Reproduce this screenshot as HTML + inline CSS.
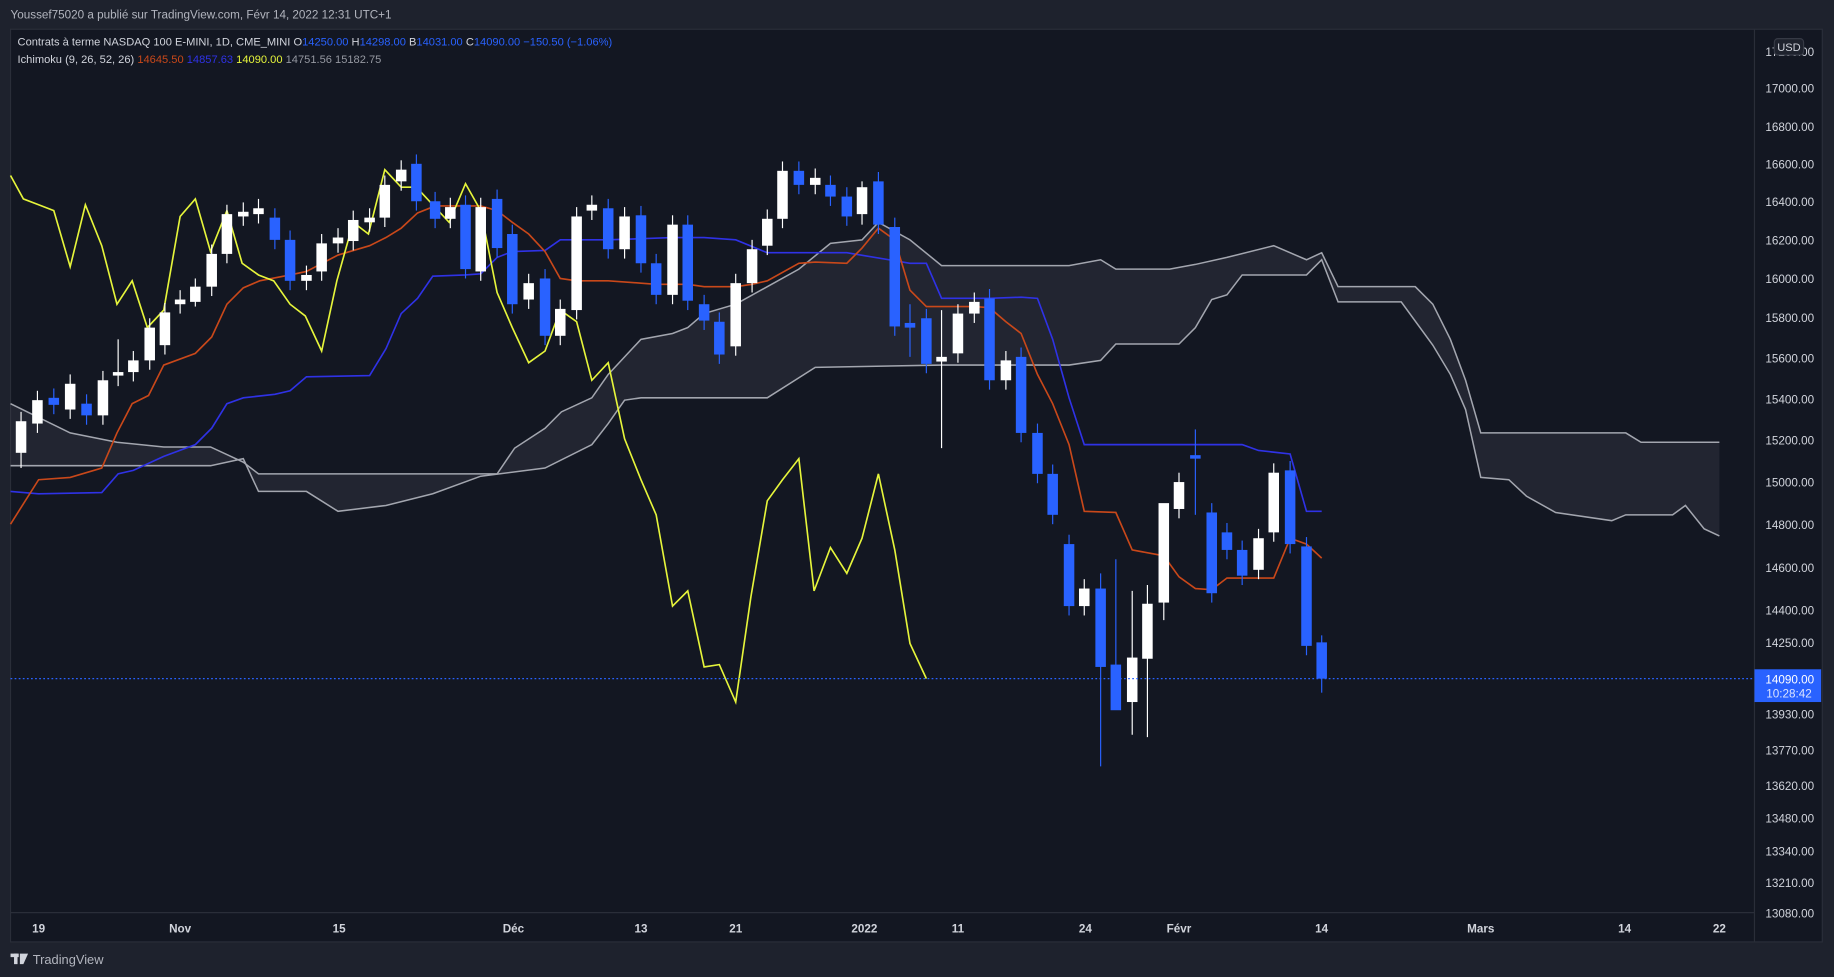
<!DOCTYPE html>
<html><head><meta charset="utf-8"><style>
html,body{margin:0;padding:0;background:#1e222d;overflow:hidden}
svg{display:block}
text{font-family:"Liberation Sans",sans-serif}
</style></head><body>
<svg width="1834" height="977" viewBox="0 0 1568 835" preserveAspectRatio="none" xmlns="http://www.w3.org/2000/svg">
<rect x="0" y="0" width="1568" height="835" fill="#1e222d"/>
<rect x="9" y="25" width="1549" height="780" fill="#131722" stroke="#2a2e39" stroke-width="1"/>
<line x1="1500" y1="25" x2="1500" y2="805" stroke="#2a2e39"/>
<line x1="9" y1="780" x2="1500" y2="780" stroke="#2a2e39"/>
<text x="9" y="16" font-size="10" fill="#b2b5be">Youssef75020 a publié sur TradingView.com, Févr 14, 2022 12:31 UTC+1</text>
<text x="15" y="39" font-size="9.5" fill="#d1d4dc">Contrats à terme NASDAQ 100 E-MINI, 1D, CME_MINI <tspan>O</tspan><tspan fill="#2962ff">14250.00</tspan> H<tspan fill="#2962ff">14298.00</tspan> B<tspan fill="#2962ff">14031.00</tspan> C<tspan fill="#2962ff">14090.00 −150.50 (−1.06%)</tspan></text>
<text x="15" y="54" font-size="9.5" fill="#d1d4dc">Ichimoku (9, 26, 52, 26) <tspan fill="#c9481a">14645.50</tspan> <tspan fill="#2f32e6">14857.63</tspan> <tspan fill="#e6f53b">14090.00</tspan> <tspan fill="#9598a1">14751.56 15182.75</tspan></text>
<!-- cloud -->
<polygon fill="rgba(120,123,140,0.15)" points="9,345 60,370 100,378 140,382 180,382 208,395 221,405 262,405 330,405 425,405 440,383 466,366 480,352 506,340 520,320 534,305 548,290 575,285 588,280 602,268 629,260 656,245 683,230 710,208 737,205 751,190 778,205 805,227 833,227 873,227 914,227 941,222 954,230 1000,230 1022,226 1049,220 1089,210 1117,222 1130,216 1144,245 1210,245 1225,260 1240,290 1253,325 1266,370 1390,370 1403,378 1470,378 1470,458 1457,452 1441,432 1430,440 1390,440 1378,445 1330,438 1305,424 1290,410 1266,408 1253,350 1240,320 1225,295 1198,258 1144,258 1130,222 1117,235 1062,235 1049,252 1036,256 1022,280 1008,294 954,294 941,308 914,312 805,312 697,314 656,340 602,340 575,340 548,340 534,342 520,362 506,380 466,400 411,407 370,422 330,432 289,437 262,420 221,420 208,392 180,398 9,398"/>
<polyline fill="none" stroke="#a3a6af" stroke-width="1.3" points="9,345 60,370 100,378 140,382 180,382 208,395 221,405 262,405 330,405 425,405 440,383 466,366 480,352 506,340 520,320 534,305 548,290 575,285 588,280 602,268 629,260 656,245 683,230 710,208 737,205 751,190 778,205 805,227 833,227 873,227 914,227 941,222 954,230 1000,230 1022,226 1049,220 1089,210 1117,222 1130,216 1144,245 1210,245 1225,260 1240,290 1253,325 1266,370 1390,370 1403,378 1470,378"/>
<polyline fill="none" stroke="#a3a6af" stroke-width="1.3" points="9,398 180,398 208,392 221,420 262,420 289,437 330,432 370,422 411,407 466,400 506,380 520,362 534,342 548,340 575,340 602,340 656,340 697,314 805,312 914,312 941,308 954,294 1008,294 1022,280 1036,256 1049,252 1062,235 1117,235 1130,222 1144,258 1198,258 1225,295 1240,320 1253,350 1266,408 1290,410 1305,424 1330,438 1378,445 1390,440 1430,440 1441,432 1457,452 1470,458"/>
<!-- kijun -->
<polyline fill="none" stroke="#2f32e6" stroke-width="1.4" points="9,420 33,422 87,421 101,405 114,402 140,390 167,380 181,366 194,345 208,340 235,337 248,334 262,322 316,321 330,298 343,268 357,255 370,236 398,235 411,234 425,220 438,215 466,214 479,205 520,205 548,204 575,203 602,203 629,205 656,216 697,216 724,216 778,225 792,225 805,255 846,255 873,254 887,255 900,290 914,340 927,380 1062,380 1076,385 1103,388 1117,437 1130,437"/>
<!-- tenkan -->
<polyline fill="none" stroke="#c9481a" stroke-width="1.4" points="9,448 33,410 60,408 87,400 100,370 113,345 127,338 140,312 167,302 181,288 194,260 208,246 222,240 248,235 262,232 289,218 316,210 330,203 343,195 357,182 372,176 411,176 425,180 438,190 452,200 466,215 479,238 493,240 520,240 548,242 561,243 588,243 602,245 629,245 643,243 656,240 683,225 697,224 724,225 737,212 751,195 765,205 778,248 792,262 833,262 846,263 860,275 873,285 887,320 900,345 914,380 927,437 954,438 968,470 995,475 1008,493 1022,503 1036,504 1049,494 1089,494 1103,460 1117,465 1130,477"/>
<!-- chikou -->
<polyline fill="none" stroke="#e6f53b" stroke-width="1.4" points="9,150 20,170 33,175 46,180 60,228 73,175 87,210 100,260 113,240 126,280 140,265 154,185 167,170 180,215 194,180 207,225 221,235 234,240 248,260 261,270 275,300 288,240 302,190 315,200 329,145 343,160 356,160 370,175 384,190 398,157 411,180 425,250 438,280 452,310 466,300 479,265 493,275 506,325 520,310 534,375 548,410 561,440 575,518 588,505 602,570 615,568 629,600 642,510 656,428 669,410 683,392 696,505 710,468 724,490 737,460 751,405 765,470 778,550 792,580"/>
<!-- candles -->
<g id="c"></g>
<line x1="9" y1="580" x2="1500" y2="580" stroke="#2962ff" stroke-width="1" stroke-dasharray="1.5,2"/>
<!-- axis labels -->
<g font-size="10" fill="#d1d4dc" text-anchor="end">
<text x="1551" y="48">17200.00</text><text x="1551" y="79">17000.00</text><text x="1551" y="112">16800.00</text><text x="1551" y="144">16600.00</text><text x="1551" y="176">16400.00</text><text x="1551" y="209">16200.00</text><text x="1551" y="242">16000.00</text><text x="1551" y="275">15800.00</text><text x="1551" y="310">15600.00</text><text x="1551" y="345">15400.00</text><text x="1551" y="380">15200.00</text><text x="1551" y="416">15000.00</text><text x="1551" y="452">14800.00</text><text x="1551" y="489">14600.00</text><text x="1551" y="525">14400.00</text><text x="1551" y="553">14250.00</text><text x="1551" y="614">13930.00</text><text x="1551" y="645">13770.00</text><text x="1551" y="675">13620.00</text><text x="1551" y="703">13480.00</text><text x="1551" y="731">13340.00</text><text x="1551" y="758">13210.00</text><text x="1551" y="784">13080.00</text>
</g>
<rect x="1517" y="33" width="25" height="14" rx="3" fill="#1e222d" stroke="#363a45"/>
<text x="1529.5" y="43.5" font-size="9.5" fill="#d1d4dc" text-anchor="middle">USD</text>
<rect x="1500" y="572" width="57" height="28" fill="#2962ff"/>
<text x="1551" y="584" font-size="10" fill="#fff" text-anchor="end">14090.00</text>
<text x="1549" y="596" font-size="10" fill="#dbe3ff" text-anchor="end">10:28:42</text>
<g font-size="10" fill="#d1d4dc" text-anchor="middle" font-weight="bold">
<text x="33" y="797">19</text><text x="154" y="797">Nov</text><text x="290" y="797">15</text><text x="439" y="797">Déc</text><text x="548" y="797">13</text><text x="629" y="797">21</text><text x="739" y="797">2022</text><text x="819" y="797">11</text><text x="928" y="797">24</text><text x="1008" y="797">Févr</text><text x="1130" y="797">14</text><text x="1266" y="797">Mars</text><text x="1389" y="797">14</text><text x="1470" y="797">22</text>
</g>
<g fill="#d1d4dc"><rect x="9" y="815" width="7" height="3"/><rect x="12" y="815" width="3" height="9"/><polygon points="17,815 24,815 20,824 17,824"/></g>
<text x="28" y="824" font-size="11" fill="#b2b5be">TradingView</text>
</svg>
<script>
var d=[[18,360,387,1],[32,342,362,1],[46,340,346,0],[60,328,350,1],[74,345,355,0],[88,325,355,1],[101,318,321,1],[114,308,318,1],[128,280,308,1],[141,267,295,1],[154,256,260,1],[167,245,258,1],[181,217,245,1],[194,183,217,1],[208,181,185,1],[221,178,183,1],[235,186,205,0],[248,205,240,0],[262,235,240,1],[275,208,232,1],[289,203,208,1],[302,188,206,1],[316,186,190,1],[329,158,186,1],[343,145,155,1],[356,140,172,0],[372,172,187,0],[385,177,187,1],[398,175,230,0],[411,177,232,1],[425,170,212,0],[438,200,260,0],[452,242,256,1],[466,238,287,0],[479,264,287,1],[493,185,265,1],[506,175,180,1],[520,178,213,0],[534,185,213,1],[548,184,225,0],[561,225,252,0],[575,192,252,1],[588,192,257,0],[602,260,274,0],[615,275,303,0],[629,242,296,1],[643,213,242,1],[656,187,210,1],[669,146,187,1],[683,146,158,0],[697,152,158,1],[710,158,168,0],[724,168,185,0],[737,160,183,1],[751,155,192,0],[765,194,279,0],[778,276,280,0],[792,272,311,0],[805,305,309,1],[819,268,302,1],[833,258,268,1],[846,255,325,0],[860,308,325,1],[873,305,370,0],[887,370,405,0],[900,405,440,0],[914,465,518,0],[927,503,518,1],[941,503,570,0],[954,568,607,0],[968,562,600,1],[981,516,563,1],[995,430,515,1],[1008,412,435,1],[1022,389,392,0],[1036,438,507,0],[1049,455,470,0],[1062,470,492,0],[1076,460,487,1],[1089,404,455,1],[1103,402,465,0],[1117,467,552,0],[1130,549,580,0]];
var w={59:[265,383],57:[260,305],75:[367,440],83:[543,592],69:[490,655],70:[478,600],71:[505,628],72:[500,630],7:[290,330],54:[155,192],12:[238,262],73:[480,530],1:[352,400]};
var s='',ns='http://www.w3.org/2000/svg';
d.forEach(function(c,i){var col=c[3]?'#ffffff':'#2962ff';var hw=w[i+1]||[c[1]-8,c[2]+8];
s+='<line x1="'+c[0]+'" x2="'+c[0]+'" y1="'+hw[0]+'" y2="'+hw[1]+'" stroke="'+col+'" stroke-width="1"/>';
s+='<rect x="'+(c[0]-4.5)+'" y="'+c[1]+'" width="9" height="'+Math.max(2,c[2]-c[1])+'" fill="'+col+'"/>';});
document.getElementById('c').innerHTML=s;
</script>
</body></html>
